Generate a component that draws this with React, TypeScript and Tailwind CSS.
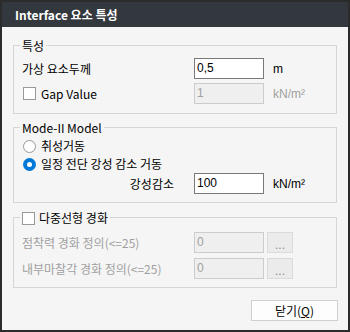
import React from 'react';

const Group: React.FC<{ legend: React.ReactNode; className?: string; children: React.ReactNode }> = ({
  legend,
  className = '',
  children,
}) => (
  <div className={`relative border border-[#d5d5d5] ${className}`}>
    <div className="absolute left-[6px] top-0 -translate-y-1/2 px-[2px] bg-[#f5f5f5] leading-[16px] flex items-center">
      {legend}
    </div>
    {children}
  </div>
);

const Checkbox: React.FC = () => (
  <span className="inline-block w-[13px] h-[13px] border border-[#999999] bg-white shrink-0" />
);

const Field: React.FC<{ value: string; disabled?: boolean }> = ({ value, disabled }) => (
  <div
    className={`w-[70px] h-[21px] border pl-[2px] leading-[19px] font-['Liberation_Sans',sans-serif] text-[12px] ${
      disabled ? 'border-[#cccccc] bg-[#efefef] text-[#a0a0a0]' : 'border-[#7a7a7a] bg-white text-black'
    }`}
  >
    {value}
  </div>
);

const Unit: React.FC<{ children: React.ReactNode; disabled?: boolean }> = ({ children, disabled }) => (
  <span className={`ml-[9px] font-['Liberation_Sans',sans-serif] text-[12px] ${disabled ? 'text-[#a0a0a0]' : 'text-black'}`}>
    {children}
  </span>
);

export default function App() {
  return (
    <div className="w-[350px] h-[332px] border-2 border-[#2b2b2b] bg-[#f5f5f5] flex flex-col font-['Noto_Sans_CJK_KR',sans-serif] text-[12px] text-black">
      <div className="h-[25px] shrink-0 bg-[#33383e] pl-[13px] flex items-center text-white font-bold text-[12px]">
        Interface 요소 특성
      </div>

      <div className="px-[11px] pt-[18px] flex flex-col">
        {/* 특성 */}
        <Group legend={<span>특성</span>} className="h-[69px] pt-[12px]">
          <div className="flex flex-col gap-[4px] pl-[8px]">
            <div className="grid grid-cols-[172px_70px_1fr] items-center h-[21px]">
              <span>가상 요소두께</span>
              <Field value="0,5" />
              <Unit>m</Unit>
            </div>
            <div className="grid grid-cols-[172px_70px_1fr] items-center h-[21px]">
              <span className="flex items-center gap-[5px] pl-[1px]">
                <Checkbox />
                Gap Value
              </span>
              <Field value="1" disabled />
              <Unit disabled>kN/m²</Unit>
            </div>
          </div>
        </Group>

        {/* Mode-II */}
        <Group legend={<span>Mode-II Model</span>} className="mt-[13px] h-[76px] pt-[9px]">
          <div className="flex flex-col pl-[8px]">
            <div className="flex items-center gap-[5px] h-[18px] pl-[1px]">
              <span className="w-[13px] h-[13px] rounded-full border border-[#999999] bg-white" />
              취성거동
            </div>
            <div className="flex items-center gap-[5px] h-[18px] pl-[1px]">
              <span className="w-[13px] h-[13px] rounded-full bg-[#0078d7] flex items-center justify-center">
                <span className="w-[5px] h-[5px] rounded-full bg-white" />
              </span>
              일정 전단 강성 감소 거동
            </div>
            <div className="grid grid-cols-[172px_70px_1fr] items-center h-[21px]">
              <span className="text-right pr-[20px]">강성감소</span>
              <Field value="100" />
              <Unit>kN/m²</Unit>
            </div>
          </div>
        </Group>

        {/* 다중선형 경화 */}
        <Group
          legend={
            <span className="flex items-center gap-[4px]">
              <Checkbox />
              다중선형 경화
            </span>
          }
          className="mt-[14px] h-[71px] pt-[14px]"
        >
          <div className="flex flex-col gap-[5px] pl-[8px] text-[#a0a0a0]">
            {['점착력 경화 정의(<=25)', '내부마찰각 경화 정의(<=25)'].map((label) => (
              <div key={label} className="grid grid-cols-[172px_70px_1fr] items-center h-[21px]">
                <span>{label}</span>
                <Field value="0" disabled />
                <span className="ml-[3px] w-[26px] h-[21px] border border-[#dadada] bg-[#ebebeb] text-center leading-[24px] text-[#8a8a8a] font-['Liberation_Sans',sans-serif]">
                  ...
                </span>
              </div>
            ))}
          </div>
        </Group>

        <button className="self-end mt-[12px] mr-[-1px] w-[87px] h-[21px] border border-[#d0d0d0] bg-[#fdfdfd] leading-[19px] text-center">
          닫기(<span className="underline">Q</span>)
        </button>
      </div>
    </div>
  );
}
